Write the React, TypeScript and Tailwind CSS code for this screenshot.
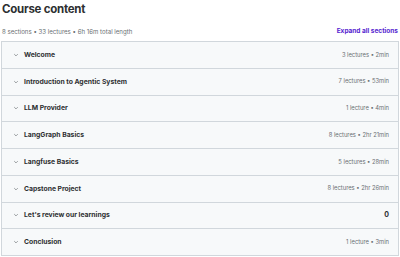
import React from "react";

const rows: [string, string, boolean?][] = [
  ["Welcome", "3 lectures • 2min"],
  ["Introduction to Agentic System", "7 lectures • 53min"],
  ["LLM Provider", "1 lecture • 4min"],
  ["LangGraph Basics", "8 lectures • 2hr 21min"],
  ["Langfuse Basics", "5 lectures • 28min"],
  ["Capstone Project", "8 lectures • 2hr 26min"],
  ["Let's review our learnings", "0", true],
  ["Conclusion", "1 lecture • 3min"],
];

function Chevron() {
  return (
    <svg width="6" height="6" viewBox="0 0 10 10" className="shrink-0">
      <path d="M2 3.5 L5 6.5 L8 3.5" fill="none" stroke="#6a6f73" strokeWidth="1.1" />
    </svg>
  );
}

export default function App() {
  return (
    <div
      className="w-[400px] h-[257px] bg-white overflow-hidden text-[#2d2f31]"
      style={{ fontFamily: "Inter, 'Noto Sans', sans-serif" }}
    >
      <div className="pl-[2px] pt-[1px] text-[11.5px] leading-[16px] font-bold tracking-[-0.25px]">Course content</div>
      <div className="flex items-center justify-between pl-[2px] pr-[2px] mt-[10px] h-[10px]">
        <span className="text-[6.1px] text-[#6a6f73]">8 sections • 33 lectures • 6h 16m total length</span>
        <span className="text-[6.5px] font-bold text-[#5624d0]">Expand all sections</span>
      </div>
      <div className="mt-[4px] mx-[1px] border border-[#d1d7dc] border-b-0">
        {rows.map(([title, meta, bold]) => (
          <div
            key={title}
            className="h-[26.75px] box-border border-b border-[#d1d7dc] bg-[#f7f9fa] flex items-center pl-[11px] pr-[9px]"
          >
            <Chevron />
            <span className="ml-[5px] text-[6.8px] font-bold text-[#2d2f31]">{title}</span>
            <span
              className={
                "ml-auto " +
                (bold ? "text-[7px] font-bold text-[#2d2f31]" : "text-[5.8px] text-[#6a6f73]")
              }
            >
              {meta}
            </span>
          </div>
        ))}
      </div>
    </div>
  );
}
